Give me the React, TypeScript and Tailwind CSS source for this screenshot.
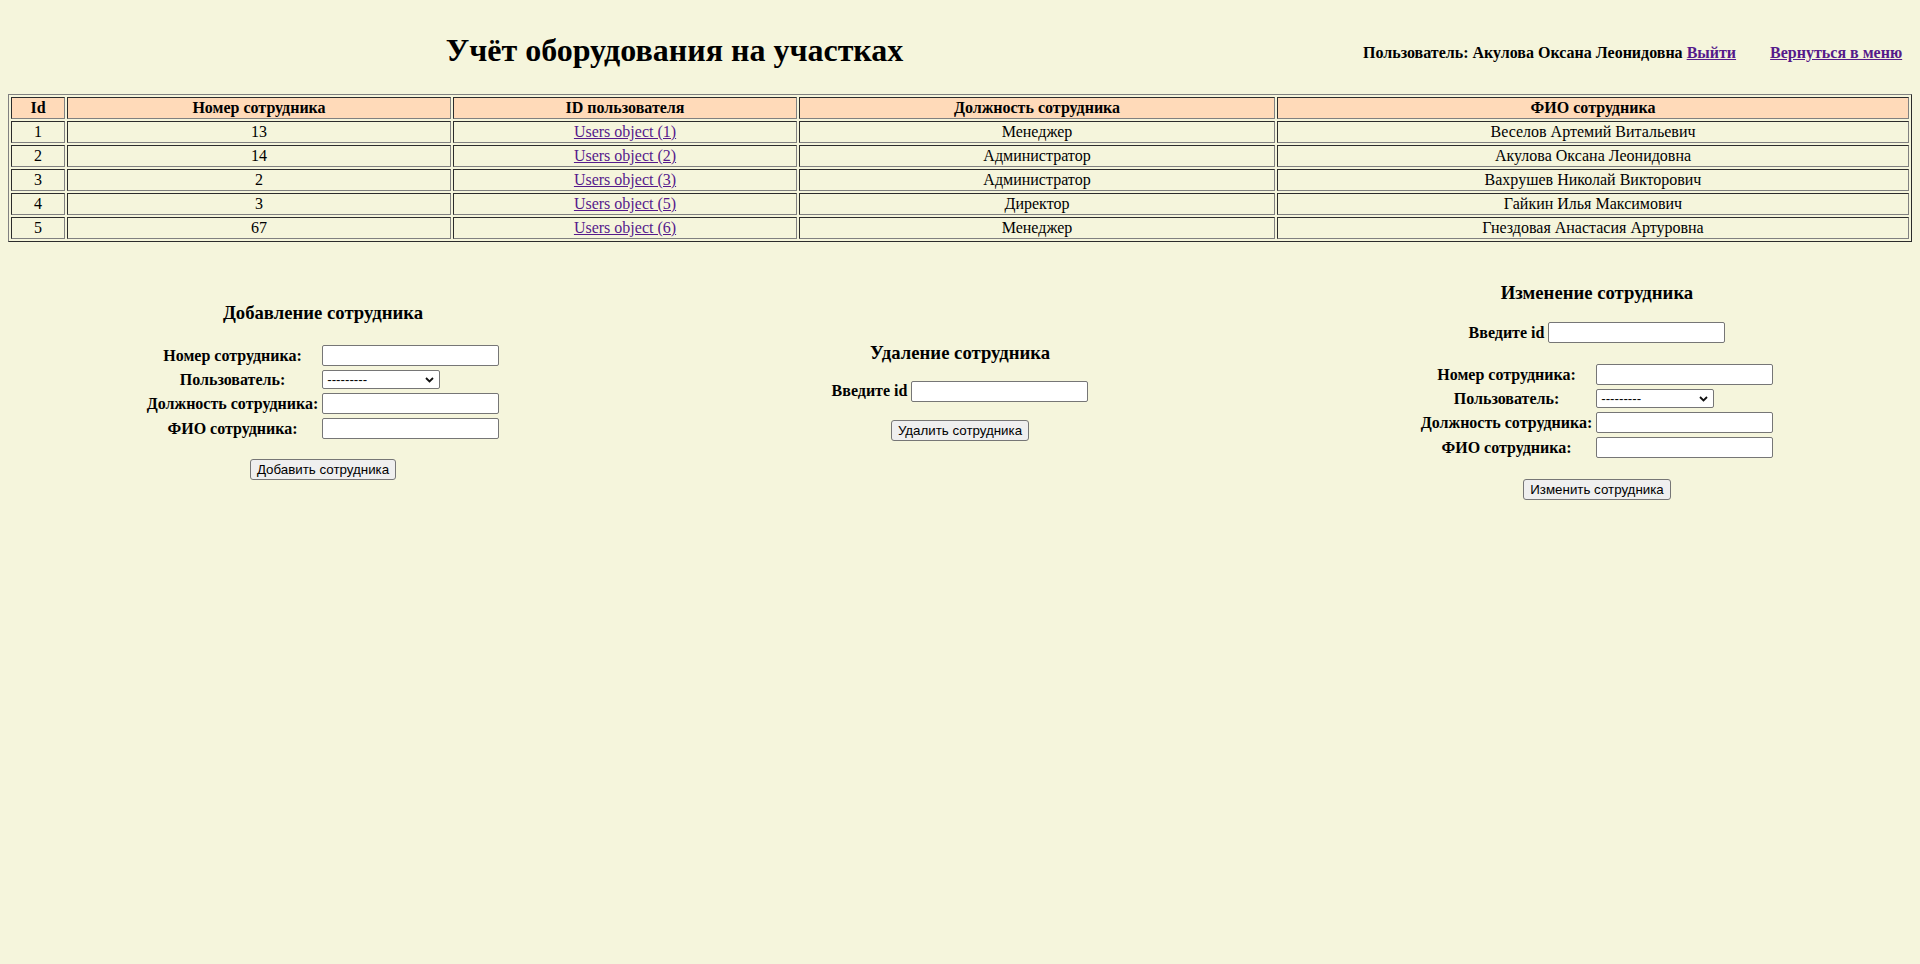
import React from "react";

const employees = [
  { id: 1, num: 13, user: "Users object (1)", post: "Менеджер", fio: "Веселов Артемий Витальевич" },
  { id: 2, num: 14, user: "Users object (2)", post: "Администратор", fio: "Акулова Оксана Леонидовна" },
  { id: 3, num: 2, user: "Users object (3)", post: "Администратор", fio: "Вахрушев Николай Викторович" },
  { id: 4, num: 3, user: "Users object (5)", post: "Директор", fio: "Гайкин Илья Максимович" },
  { id: 5, num: 67, user: "Users object (6)", post: "Менеджер", fio: "Гнездовая Анастасия Артуровна" },
];

// классическая "border=1" рамка ячейки: сверху/слева тёмная, снизу/справа серая
const cell =
  "border border-t-[#2c2c2c] border-l-[#2c2c2c] border-r-[#808080] border-b-[#808080] p-[1px] text-center leading-[18px]";

const inputCls =
  "block w-[177px] h-[21px] border border-[#767676] rounded-[2px] bg-white px-[2px] font-['Liberation_Sans',Arial,sans-serif] text-[13.33px]";

const btnCls =
  "h-[21px] px-[6px] border border-[#767676] rounded-[3px] bg-[#efefef] font-['Liberation_Sans',Arial,sans-serif] text-[13.33px] text-black leading-[15px]";

function UserSelect() {
  return (
    <div className="relative w-[118px] h-[19px]">
      <select className="block appearance-none w-[118px] h-[19px] border border-[#767676] rounded-[2px] bg-white pl-[4px] font-['Liberation_Sans',Arial,sans-serif] text-[13.33px] leading-[15px]">
        <option>---------</option>
      </select>
      <svg
        className="absolute right-[6px] top-[7px] pointer-events-none"
        width="9"
        height="6"
        viewBox="0 0 9 6"
      >
        <path d="M1 1 L4.5 4.5 L8 1" fill="none" stroke="#111" strokeWidth="1.8" />
      </svg>
    </div>
  );
}

function EmployeeFields() {
  const rows = [
    { label: "Номер сотрудника:", kind: "input" },
    { label: "Пользователь:", kind: "select" },
    { label: "Должность сотрудника:", kind: "input" },
    { label: "ФИО сотрудника:", kind: "input" },
  ];
  return (
    <table className="border-separate border-spacing-[2px]">
      <tbody>
        {rows.map(r => (
          <tr key={r.label}>
            <th className="p-[1px] text-center align-middle font-bold text-[16px] leading-[18px]">
              {r.label}
            </th>
            <td className="p-[1px] align-middle">
              {r.kind === "select" ? <UserSelect /> : <input type="text" className={inputCls} />}
            </td>
          </tr>
        ))}
      </tbody>
    </table>
  );
}

export default function App() {
  return (
    <div className="min-h-screen bg-[#f5f5dc] px-[8px] pt-[32px] text-black font-['Liberation_Serif','Times_New_Roman',serif] text-[16px]">
      <div className="flex items-start">
        <h1 className="flex-1 text-center text-[32px] font-bold leading-[37px]">
          Учёт оборудования на участках
        </h1>
        <div className="w-[571px] pl-[22px] pr-[11px] mt-[12px] flex gap-[34px] font-bold leading-[18px] whitespace-nowrap">
          <span>
            Пользователь: Акулова Оксана Леонидовна{" "}
            <a href="#" className="text-[#551a8b] underline">
              Выйти
            </a>
          </span>
          <a href="#" className="text-[#551a8b] underline">
            Вернуться в меню
          </a>
        </div>
      </div>

      <table className="mt-[25px] w-full border-separate border-spacing-[2px] border border-t-[#808080] border-l-[#808080] border-r-[#2c2c2c] border-b-[#2c2c2c]">
        <thead>
          <tr className="bg-[#ffdab9]">
            <th className={`${cell} w-[54px] font-bold`}>Id</th>
            <th className={`${cell} w-[384px] font-bold`}>Номер сотрудника</th>
            <th className={`${cell} w-[344px] font-bold`}>ID пользователя</th>
            <th className={`${cell} w-[476px] font-bold`}>Должность сотрудника</th>
            <th className={`${cell} font-bold`}>ФИО сотрудника</th>
          </tr>
        </thead>
        <tbody>
          {employees.map(e => (
            <tr key={e.id}>
              <td className={cell}>{e.id}</td>
              <td className={cell}>{e.num}</td>
              <td className={cell}>
                <a href="#" className="text-[#551a8b] underline">
                  {e.user}
                </a>
              </td>
              <td className={cell}>{e.post}</td>
              <td className={cell}>{e.fio}</td>
            </tr>
          ))}
        </tbody>
      </table>

      <div className="grid grid-cols-3 gap-x-[7px] items-center pt-[40px]">
        {/* добавление */}
        <div className="flex flex-col items-center">
          <h3 className="text-[18.72px] font-bold leading-[22px]">Добавление сотрудника</h3>
          <div className="mt-[18px]">
            <EmployeeFields />
          </div>
          <button className={`${btnCls} mt-[17px]`}>Добавить сотрудника</button>
        </div>

        {/* удаление */}
        <div className="flex flex-col items-center">
          <h3 className="text-[18.72px] font-bold leading-[22px]">Удаление сотрудника</h3>
          <div className="mt-[17px] flex items-center gap-[4px]">
            <span className="font-bold leading-[18px]">Введите id</span>
            <input type="text" className={inputCls} />
          </div>
          <button className={`${btnCls} mt-[18px]`}>Удалить сотрудника</button>
        </div>

        {/* изменение */}
        <div className="flex flex-col items-center">
          <h3 className="text-[18.72px] font-bold leading-[22px]">Изменение сотрудника</h3>
          <div className="mt-[18px] flex items-center gap-[4px]">
            <span className="font-bold leading-[18px]">Введите id</span>
            <input type="text" className={inputCls} />
          </div>
          <div className="mt-[18px]">
            <EmployeeFields />
          </div>
          <button className={`${btnCls} mt-[18px]`}>Изменить сотрудника</button>
        </div>
      </div>
    </div>
  );
}
